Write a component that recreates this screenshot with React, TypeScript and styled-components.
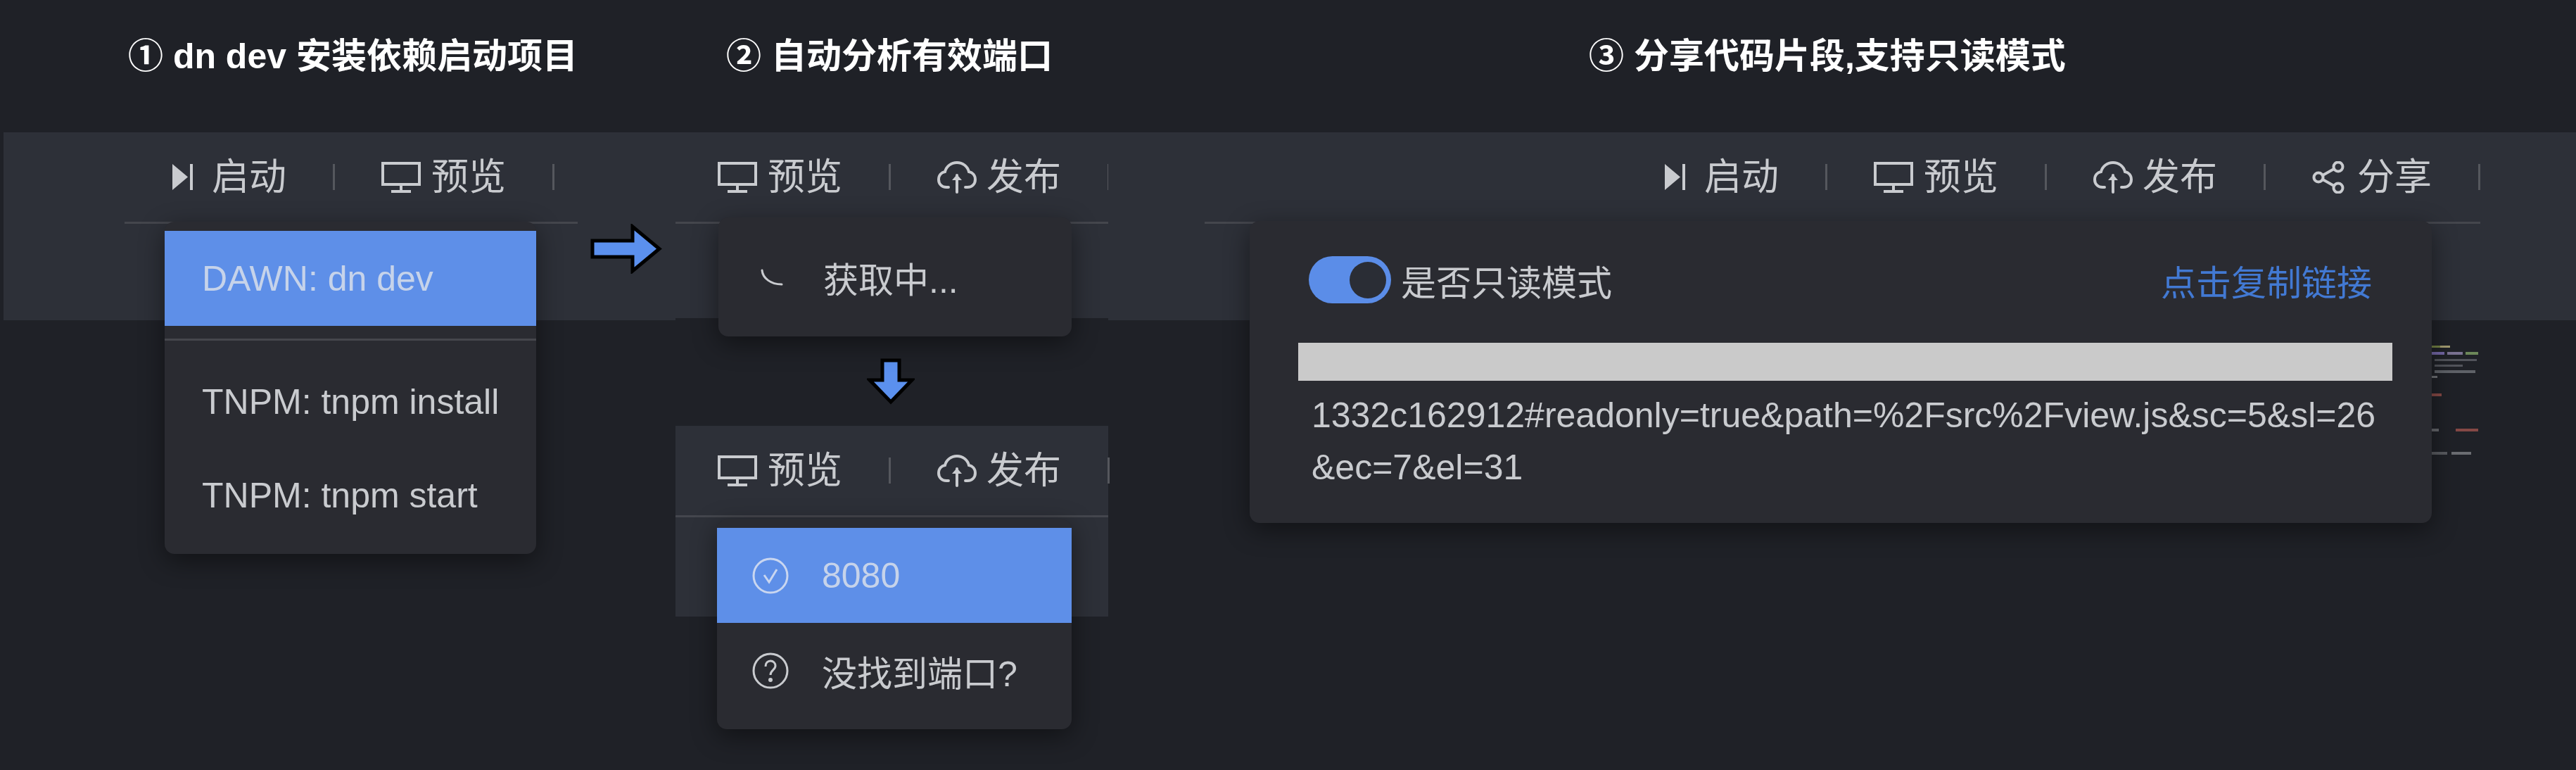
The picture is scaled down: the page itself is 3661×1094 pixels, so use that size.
import React, { FC, ReactNode } from 'react';
import styled, { createGlobalStyle } from 'styled-components';

const GlobalStyle = createGlobalStyle`
  html, body {
    margin: 0;
    padding: 0;
    background: #1f2127;
  }
  body {
    font-family: "Liberation Sans", "Noto Sans CJK SC", sans-serif;
  }
`;

const MonitorIcon = () => (
  <svg width="56" height="44" viewBox="0 0 56 44" fill="none" stroke="#c9cbcf" strokeWidth="4">
    <rect x="2" y="2" width="52" height="30" />
    <path d="M28 32v10M14 42h28" />
  </svg>
);

const PlayIcon = () => (
  <svg width="29" height="37" viewBox="0 0 29 37" fill="#c9cbcf">
    <path d="M0 0l22 18.5L0 37z" />
    <rect x="25" y="0" width="4" height="37" />
  </svg>
);

const CloudIcon = () => (
  <svg width="56" height="46" viewBox="0 0 56 46" fill="none" stroke="#c9cbcf" strokeWidth="4" strokeLinecap="round">
    <path d="M16 37H13C6 37 2 32 2 26c0-6 4-10 9-11C13 7 20 2 28 2s15 5 17 13c5 1 9 5 9 11 0 6-4 11-11 11h-3" />
    <path d="M28 44V20" />
    <path d="M21 27l7-8 7 8" fill="#c9cbcf" stroke="none" />
  </svg>
);

const ShareIcon = () => (
  <svg width="46" height="46" viewBox="0 0 46 46" fill="none" stroke="#c9cbcf" strokeWidth="4">
    <circle cx="9" cy="23" r="6.5" />
    <circle cx="37" cy="8" r="6.5" />
    <circle cx="37" cy="38" r="6.5" />
    <path d="M15 20l16-9M15 26l16 9" />
  </svg>
);

const SpinnerIcon = () => (
  <svg width="32" height="24" viewBox="0 0 32 24" fill="none" stroke="#c9cbcf" strokeWidth="3" strokeLinecap="round">
    <path d="M2 2c1 11 12 20 28 20" />
  </svg>
);

const CheckCircleIcon = () => (
  <svg width="52" height="52" viewBox="0 0 52 52" fill="none" stroke="#c9d6f0" strokeWidth="3">
    <circle cx="26" cy="26" r="24" />
    <path d="M17 25l7 10 11-18" />
  </svg>
);

const HelpCircleIcon = () => (
  <svg width="52" height="52" viewBox="0 0 52 52" fill="none" stroke="#c9cbcf" strokeWidth="3">
    <circle cx="26" cy="26" r="24" />
    <path d="M19 20c0-5 3-8 7-8s7 3 7 7c0 6-7 6-7 13" />
    <circle cx="26" cy="39" r="1.5" fill="#c9cbcf" />
  </svg>
);

const BlockArrow: FC<{ width: number; height: number; points: string }> = ({ width, height, points }) => (
  <svg width={width} height={height} viewBox={`0 0 ${width} ${height}`}>
    <polygon points={points} fill="#5b90ee" stroke="#000" strokeWidth="5" strokeLinejoin="miter" />
  </svg>
);

const RightArrow = () => <BlockArrow width={102} height={71} points="3,24 60,24 60,4 98,35.5 60,67 60,47 3,47" />;
const DownArrow = () => <BlockArrow width={68} height={66} points="22,3 46,3 46,31 64,31 34,62 4,31 22,31" />;

const CodePeek = () => (
  <svg width="69" height="160" viewBox="0 0 69 160">
    <g opacity="0.75">
      <rect x="0" y="3" width="12" height="3" fill="#8fa24e" />
      <rect x="12" y="3" width="14" height="3" fill="#cfc58a" />
      <rect x="0" y="12" width="18" height="4" fill="#8f7fd0" />
      <rect x="22" y="12" width="22" height="4" fill="#9a8fb8" />
      <rect x="48" y="12" width="18" height="4" fill="#86a96a" />
      <rect x="4" y="22" width="60" height="3" fill="#63666d" />
      <rect x="4" y="30" width="40" height="3" fill="#63666d" />
      <rect x="4" y="38" width="58" height="4" fill="#75787e" />
      <rect x="0" y="46" width="8" height="3" fill="#8a8c90" />
      <rect x="0" y="71" width="14" height="4" fill="#a8554f" />
      <rect x="0" y="121" width="10" height="4" fill="#7c7e82" />
      <rect x="34" y="121" width="32" height="4" fill="#a8554f" />
      <rect x="0" y="154" width="22" height="4" fill="#6d6f74" />
      <rect x="28" y="154" width="28" height="4" fill="#85878b" />
    </g>
  </svg>
);

interface ToolProps {
  icon: ReactNode;
  label: string;
  gap: number;
}

const Tool: FC<ToolProps> = ({ icon, label, gap }) => (
  <>
    <ToolItem $gap={gap}>
      <ToolIcon>{icon}</ToolIcon>
      <span>{label}</span>
    </ToolItem>
    <Separator />
  </>
);

const startTool = <Tool icon={<PlayIcon />} label="启动" gap={27} />;
const previewTool = <Tool icon={<MonitorIcon />} label="预览" gap={15} />;
const publishTool = <Tool icon={<CloudIcon />} label="发布" gap={14} />;
const shareTool = <Tool icon={<ShareIcon />} label="分享" gap={18} />;

const App: FC = () => {
  return (
    <Page>
      <GlobalStyle />

      <FirstSection>
        <Title $indent={177}>① dn dev 安装依赖启动项目</Title>
        <Band $height={267}>
          <FirstToolbar>
            {startTool}
            {previewTool}
          </FirstToolbar>
          <RunMenu>
            <RunItem $active>DAWN: dn dev</RunItem>
            <MenuDivider />
            <RunItem>TNPM: tnpm install</RunItem>
            <RunItem>TNPM: tnpm start</RunItem>
          </RunMenu>
          <FlowArrow>
            <RightArrow />
          </FlowArrow>
        </Band>
      </FirstSection>

      <SecondSection>
        <Title $indent={72}>② 自动分析有效端口</Title>
        <Band $height={264}>
          <PortToolbar>
            {previewTool}
            {publishTool}
          </PortToolbar>
          <LoadingMenu>
            <PortItem>
              <PortIcon>
                <SpinnerIcon />
              </PortIcon>
              获取中...
            </PortItem>
          </LoadingMenu>
          <FlowArrowNext>
            <RightArrow />
          </FlowArrowNext>
        </Band>
        <DownArrowSlot>
          <DownArrow />
        </DownArrowSlot>
        <Band $height={271}>
          <PortToolbar>
            {previewTool}
            {publishTool}
          </PortToolbar>
          <PortMenu>
            <PortItem $active>
              <PortIcon>
                <CheckCircleIcon />
              </PortIcon>
              8080
            </PortItem>
            <PortItem>
              <PortIcon>
                <HelpCircleIcon />
              </PortIcon>
              没找到端口?
            </PortItem>
          </PortMenu>
        </Band>
      </SecondSection>

      <ThirdSection>
        <Title $indent={683}>③ 分享代码片段,支持只读模式</Title>
        <Band $height={267}>
          <ShareToolbar>
            {startTool}
            {previewTool}
            {publishTool}
            {shareTool}
          </ShareToolbar>
          <SharePanel>
            <PanelHeader>
              <ReadonlyField>
                <Toggle>
                  <ToggleThumb />
                </Toggle>
                是否只读模式
              </ReadonlyField>
              <CopyLink>点击复制链接</CopyLink>
            </PanelHeader>
            <RedactedBar />
            <ShareUrl>1332c162912#readonly=true&amp;path=%2Fsrc%2Fview.js&amp;sc=5&amp;sl=26&amp;ec=7&amp;el=31</ShareUrl>
          </SharePanel>
        </Band>
        <CodePeekSlot>
          <CodePeek />
        </CodePeekSlot>
      </ThirdSection>
    </Page>
  );
};

const Page = styled.div`
  display: flex;
  width: 3661px;
  height: 1094px;
  overflow: hidden;
  background: #1f2127;
  color: #c9cbcf;
`;

const FirstSection = styled.section`
  display: flex;
  flex-direction: column;
  width: 955px;
  margin-left: 5px;
`;

const SecondSection = styled.section`
  display: flex;
  flex-direction: column;
  width: 615px;
`;

const ThirdSection = styled.section`
  display: flex;
  flex-direction: column;
  width: 2086px;
`;

const Title = styled.h2<{ $indent: number }>`
  height: 188px;
  box-sizing: border-box;
  margin: 0;
  padding: 50px 0 0 ${(props) => props.$indent}px;
  font-size: 50px;
  line-height: 60px;
  font-weight: 700;
  color: #ffffff;
  white-space: nowrap;
`;

const Band = styled.div<{ $height: number }>`
  position: relative;
  height: ${(props) => props.$height}px;
  background: #2d3038;
`;

const Toolbar = styled.div`
  display: flex;
  align-items: center;
  height: 130px;
  box-sizing: border-box;
  border-bottom: 3px solid #44464d;
  font-size: 53px;
  line-height: 60px;
`;

const FirstToolbar = styled(Toolbar)`
  margin: 0 139px 0 172px;
  padding-left: 68px;
`;

const PortToolbar = styled(Toolbar)`
  padding-left: 60px;
`;

const ShareToolbar = styled(Toolbar)`
  justify-content: flex-end;
  margin: 0 136px 0 137px;
`;

const ToolItem = styled.div<{ $gap: number }>`
  display: flex;
  align-items: center;
  gap: ${(props) => props.$gap}px;
  white-space: nowrap;
`;

const ToolIcon = styled.span`
  display: flex;
`;

const Separator = styled.i`
  flex: none;
  width: 3px;
  height: 37px;
  margin: 0 66px 0 66px;
  background: #55575d;
  &:last-child {
    margin-right: 0;
  }
`;

const Menu = styled.div`
  position: absolute;
  box-sizing: border-box;
  background: #2a2b31;
  border-radius: 14px;
  box-shadow: 0 10px 36px rgba(0, 0, 0, 0.45);
  font-size: 50px;
`;

const RunMenu = styled(Menu)`
  left: 229px;
  top: 127px;
  width: 528px;
  height: 472px;
  padding-top: 13px;
`;

const RunItem = styled.div<{ $active?: boolean }>`
  display: flex;
  align-items: center;
  height: ${(props) => (props.$active ? 135 : 133)}px;
  padding-left: 53px;
  background: ${(props) => (props.$active ? '#5e8fe8' : 'transparent')};
  color: ${(props) => (props.$active ? '#c6d3ea' : '#c9cbcf')};
  white-space: nowrap;
`;

const MenuDivider = styled.div`
  height: 3px;
  margin: 18px 0 20px;
  background: #45464c;
`;

const LoadingMenu = styled(Menu)`
  left: 61px;
  top: 121px;
  width: 502px;
  height: 169px;
  display: flex;
  align-items: center;
`;

const PortMenu = styled(Menu)`
  left: 59px;
  top: 133px;
  width: 504px;
  height: 298px;
  padding-top: 12px;
`;

const PortItem = styled.div<{ $active?: boolean }>`
  display: flex;
  align-items: center;
  gap: 47px;
  width: 100%;
  height: 135px;
  padding-left: 50px;
  box-sizing: border-box;
  background: ${(props) => (props.$active ? '#5e8fe8' : 'transparent')};
  color: ${(props) => (props.$active ? '#c6d3ea' : '#c9cbcf')};
  white-space: nowrap;
`;

const PortIcon = styled.span`
  display: flex;
  justify-content: center;
  width: 52px;
`;

const FlowArrow = styled.div`
  position: absolute;
  left: 834px;
  top: 130px;
  display: flex;
`;

const FlowArrowNext = styled(FlowArrow)`
  left: 636px;
`;

const DownArrowSlot = styled.div`
  display: flex;
  margin: 57px 0 30px 272px;
`;

const SharePanel = styled(Menu)`
  left: 201px;
  top: 126px;
  width: 1680px;
  height: 429px;
  padding: 50px 56px 0 69px;
`;

const PanelHeader = styled.div`
  display: flex;
  align-items: center;
  justify-content: space-between;
  height: 67px;
  padding: 0 29px 0 15px;
`;

const ReadonlyField = styled.div`
  display: flex;
  align-items: center;
  gap: 14px;
`;

const Toggle = styled.span`
  display: flex;
  align-items: center;
  justify-content: flex-end;
  width: 117px;
  height: 67px;
  padding-right: 7px;
  box-sizing: border-box;
  border-radius: 34px;
  background: #5b8de8;
`;

const ToggleThumb = styled.span`
  width: 52px;
  height: 52px;
  border-radius: 50%;
  background: #2a2d35;
`;

const CopyLink = styled.span`
  color: #4279d3;
`;

const RedactedBar = styled.div`
  height: 54px;
  margin-top: 56px;
  background: #cacaca;
`;

const ShareUrl = styled.div`
  margin-top: 12px;
  padding-left: 19px;
  line-height: 74px;
  word-break: break-all;
`;

const CodePeekSlot = styled.div`
  display: flex;
  margin: 33px 0 0 1881px;
`;

export default App;
